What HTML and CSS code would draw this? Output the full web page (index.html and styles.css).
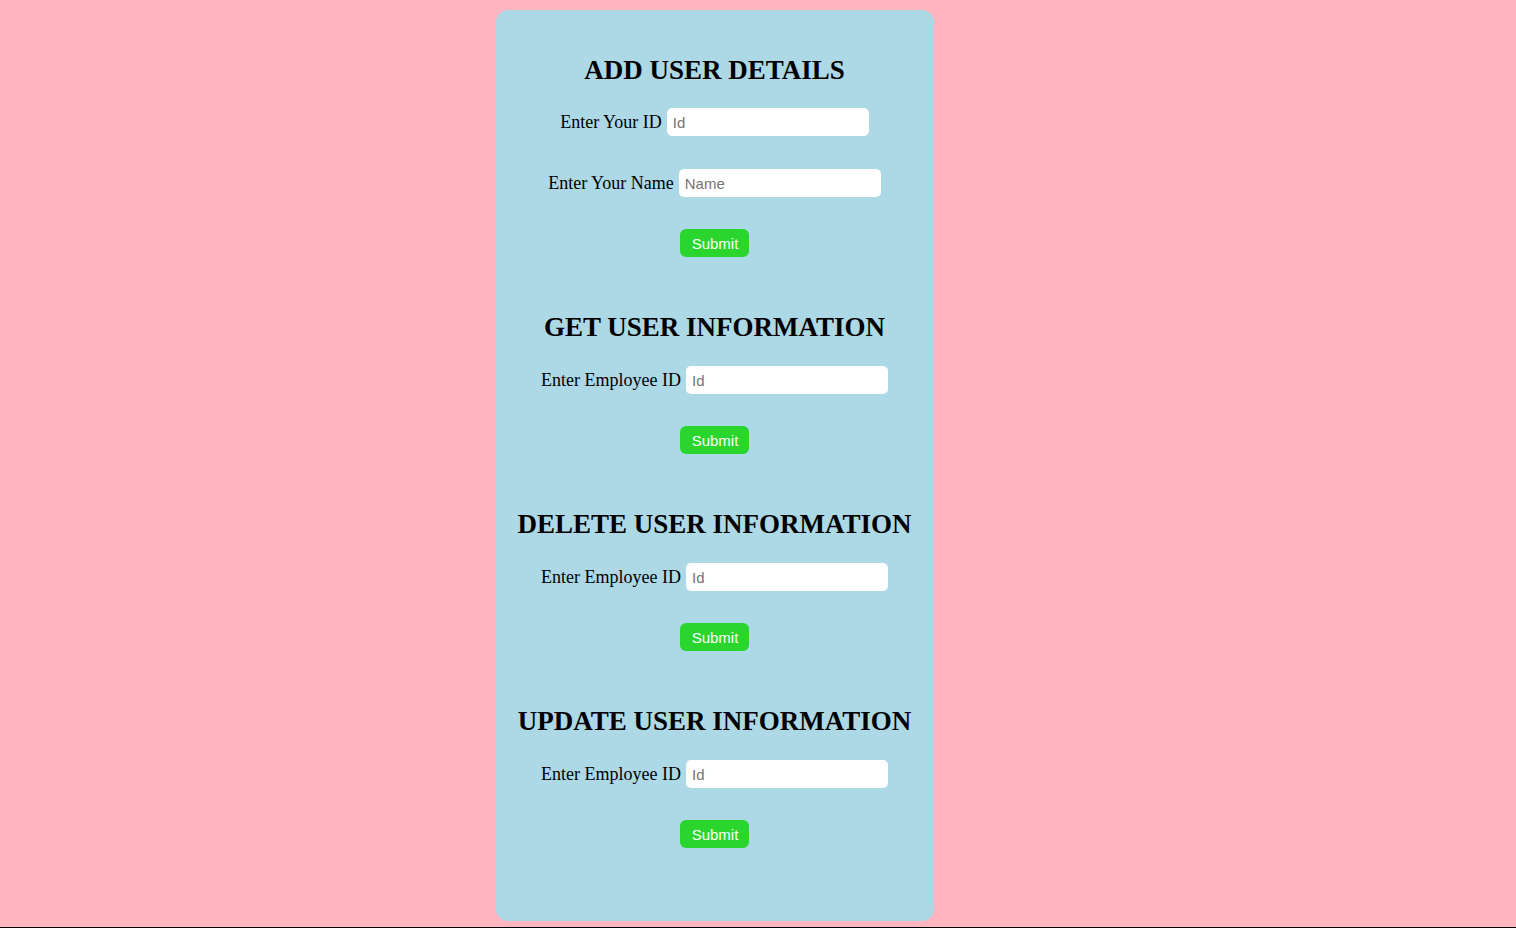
FILE: index.html
```html
<!DOCTYPE html>
<html lang="en">
<head>
<meta charset="utf-8">
<title>User Details</title>
<link rel="stylesheet" href="styles.css">
</head>
<body>
<div class="page">
  <main class="card">
    <section class="section">
      <h2 class="title">ADD USER DETAILS</h2>
      <div class="row"><label class="label">Enter Your ID</label><input class="field" type="text" placeholder="Id"></div>
      <div class="row"><label class="label">Enter Your Name</label><input class="field" type="text" placeholder="Name"></div>
      <button class="btn">Submit</button>
    </section>
    <section class="section">
      <h2 class="title">GET USER INFORMATION</h2>
      <div class="row"><label class="label">Enter Employee ID</label><input class="field" type="text" placeholder="Id"></div>
      <button class="btn">Submit</button>
    </section>
    <section class="section">
      <h2 class="title">DELETE USER INFORMATION</h2>
      <div class="row"><label class="label">Enter Employee ID</label><input class="field" type="text" placeholder="Id"></div>
      <button class="btn">Submit</button>
    </section>
    <section class="section">
      <h2 class="title">UPDATE USER INFORMATION</h2>
      <div class="row"><label class="label">Enter Employee ID</label><input class="field" type="text" placeholder="Id"></div>
      <button class="btn">Submit</button>
    </section>
  </main>
</div>
</body>
</html>
```

FILE: styles.css
```css
html, body {
  margin: 0;
  padding: 0;
}
body {
  background: #ffb6c1;
  font-family: "Liberation Serif", "Times New Roman", serif;
}
.page {
  min-height: 928px;
  box-sizing: border-box;
  border-bottom: 1px solid #000;
  padding-top: 10px;
  padding-left: 496px;
  display: flex;
  justify-content: flex-start;
}
.card {
  width: 438px;
  height: 911px;
  box-sizing: border-box;
  background: #add8e6;
  border-radius: 12px;
  padding-top: 44px;
  padding-right: 1px;
  display: flex;
  flex-direction: column;
  align-items: center;
}
.section {
  display: flex;
  flex-direction: column;
  align-items: center;
  width: 100%;
}
.section + .section {
  margin-top: 54px;
}
.title {
  margin: 0 0 22px;
  font-size: 27px;
  line-height: 32px;
  font-weight: bold;
  color: #000;
  white-space: nowrap;
}
.section + .section .title {
  margin-bottom: 23px;
}
.row {
  display: flex;
  align-items: center;
  justify-content: center;
  gap: 5px;
  height: 28px;
  margin-bottom: 32px;
}
.row + .row {
  margin-top: 1px;
}
.label {
  font-size: 18px;
  color: #000;
}
.field {
  width: 202px;
  height: 28px;
  box-sizing: border-box;
  border: none;
  border-radius: 5px;
  background: #fff;
  padding: 0 6px;
  font-family: "Liberation Sans", Arial, sans-serif;
  font-size: 15px;
  outline: none;
}
.field::placeholder {
  color: #757575;
}
.btn {
  height: 28px;
  padding: 0 11px 0 12px;
  border: none;
  border-radius: 6px;
  background: #2ad62e;
  color: #fff;
  font-family: "Liberation Sans", Arial, sans-serif;
  font-size: 15px;
  cursor: pointer;
}
```
